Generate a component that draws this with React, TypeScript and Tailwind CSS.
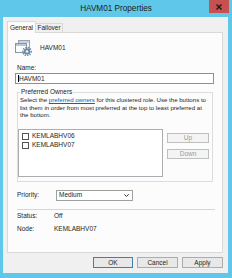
export default function App() {
  return (
    <div className="w-[232px] h-[278px] bg-[#5fc8ea] flex flex-col overflow-hidden font-['Liberation_Sans',Arial,sans-serif] text-[6.5px] text-[#1e1e1e]">
      {/* title bar */}
      <div className="h-[17px] grid grid-cols-[1fr_auto_1fr] items-start">
        <div />
        <div className="text-[8.2px] leading-[17px] text-[#1b1b1b]">HAVM01 Properties</div>
        <div className="flex justify-end pr-[3px]">
          <div className="w-[20px] h-[13px] bg-[#c75050] flex items-center justify-center">
            <svg width="6" height="6" viewBox="0 0 6 6">
              <path d="M0.5 0.5 L5.5 5.5 M5.5 0.5 L0.5 5.5" stroke="#1a1a1a" strokeWidth="1.4" />
            </svg>
          </div>
        </div>
      </div>

      {/* dialog body */}
      <div className="flex-1 ml-[3px] mr-[4px] mb-[5px] bg-[#f0f0f0] flex flex-col pl-[4px] pr-[5px] pt-[4px]">
        {/* tabs */}
        <div className="flex items-end h-[12px] relative z-10">
          <div className="w-[29px] h-[12px] bg-[#fcfcfc] border border-[#d9d9d9] border-b-0 leading-[11px] text-center">
            General
          </div>
          <div className="w-[27px] h-[9px] mb-[1px] bg-[#f0f0f0] border border-[#d9d9d9] border-l-0 border-b-0 leading-[8px] text-center">
            Failover
          </div>
        </div>

        {/* panel */}
        <div className="-mt-[1px] h-[221px] bg-[#fcfcfc] border border-[#d9d9d9] flex flex-col pl-[7px]">
          <div className="mt-[7px] h-[16px] flex items-center">
            <svg width="17" height="16" viewBox="0 0 17 16">
              <rect x="3.5" y="0.5" width="11" height="9" fill="#f4f6f8" stroke="#9aa3ad" />
              <rect x="4" y="1" width="10" height="2" fill="#c8d2dc" />
              <rect x="0.5" y="3.5" width="11" height="9" fill="#fbfcfd" stroke="#8b95a0" />
              <rect x="1" y="4" width="10" height="2" fill="#b9c6d3" />
              <circle cx="12" cy="11.5" r="3.3" fill="#6f8aa6" />
              <circle cx="12" cy="11.5" r="4.2" fill="none" stroke="#6f8aa6" strokeWidth="1.4" strokeDasharray="1.3 1.2" />
              <circle cx="12" cy="11.5" r="1.3" fill="#eef2f6" />
            </svg>
            <span className="ml-[8px]">HAVM01</span>
          </div>

          <div className="mt-[8px] ml-[2px] leading-[8px]">Name:</div>
          <div className="mt-[1px] w-[199px] h-[11px] border border-[#569de5] bg-white flex items-center pl-[2px]">
            <span className="border-l border-[#000] leading-[7px]">HAVM01</span>
          </div>

          <fieldset className="mt-[4px] ml-[2px] w-[196px] border border-[#dcdcdc] px-0 pb-[4px]">
            <legend className="ml-[2px] px-[1px] leading-[8px] text-[#222]">Preferred Owners</legend>
            <p className="pl-[2px] pr-[6px] text-[6.1px] leading-[7.5px]">
              Select the <span className="text-[#0066cc] underline">preferred owners</span> for this clustered role. Use the buttons to list them in order from most preferred at the top to least preferred at the bottom.
            </p>
            <div className="mt-[10px] flex items-start">
              <div className="w-[145px] h-[48px] bg-white border border-[#abadb3] pt-[3px] pl-[3px] flex flex-col gap-[2px]">
                {['KEMLABHV06', 'KEMLABHV07'].map((n) => (
                  <div key={n} className="flex items-center h-[7px]">
                    <div className="w-[7px] h-[7px] border border-[#555] bg-white" />
                    <span className="ml-[3px]">{n}</span>
                  </div>
                ))}
              </div>
              <div className="ml-[4px] mt-[4px] flex flex-col gap-[6px]">
                <div className="w-[42px] h-[10px] border border-[#bfbfbf] bg-[#f4f4f4] text-[#9a9a9a] flex items-center justify-center">Up</div>
                <div className="w-[42px] h-[10px] border border-[#bfbfbf] bg-[#f4f4f4] text-[#9a9a9a] flex items-center justify-center">Down</div>
              </div>
            </div>
          </fieldset>

          <div className="mt-[8px] flex items-center h-[11px]">
            <span className="ml-[2px] w-[39px]">Priority:</span>
            <div className="w-[77px] h-[11px] border border-[#a0a0a0] bg-white flex items-center justify-between pl-[2px] pr-[3px]">
              <span>Medium</span>
              <svg width="5" height="3" viewBox="0 0 5 3">
                <path d="M0.3 0.3 L2.5 2.5 L4.7 0.3" stroke="#333" strokeWidth="1" fill="none" />
              </svg>
            </div>
          </div>

          <div className="mt-[8px] ml-[2px] w-[198px] h-[1px] bg-[#d6d6d6]" />

          <div className="mt-[2px] flex leading-[8px]">
            <span className="ml-[2px] w-[37px]">Status:</span>
            <span>Off</span>
          </div>
          <div className="mt-[5px] flex leading-[8px]">
            <span className="ml-[2px] w-[37px]">Node:</span>
            <span>KEMLABHV07</span>
          </div>
        </div>

        {/* buttons */}
        <div className="mt-[4px] flex justify-end gap-[4px]">
          <div className="w-[40px] h-[11px] border border-[#3c7fb1] bg-[#e8e8e8] flex items-center justify-center">OK</div>
          <div className="w-[41px] h-[11px] border border-[#acacac] bg-[#e8e8e8] flex items-center justify-center">Cancel</div>
          <div className="w-[41px] h-[11px] border border-[#acacac] bg-[#e8e8e8] flex items-center justify-center">Apply</div>
        </div>
      </div>
    </div>
  );
}
